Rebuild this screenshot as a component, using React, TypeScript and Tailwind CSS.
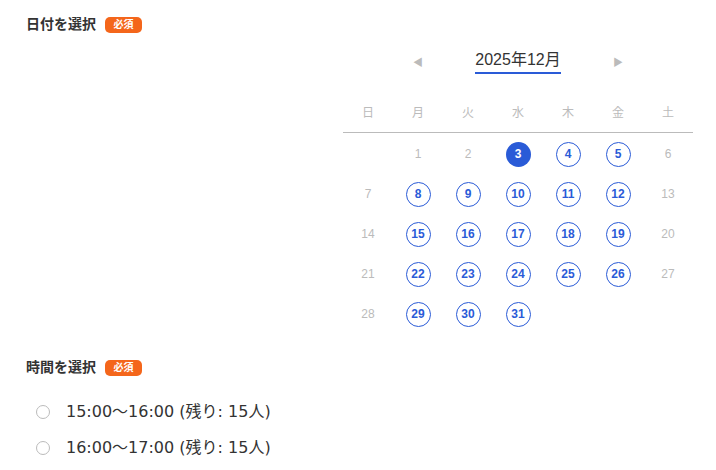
const weekdays = ['日', '月', '火', '水', '木', '金', '土'];

const available = new Set([3, 4, 5, 8, 9, 10, 11, 12, 15, 16, 17, 18, 19, 22, 23, 24, 25, 26, 29, 30, 31]);
const selected = 3;

const slots = ['15:00〜16:00 (残り: 15人)', '16:00〜17:00 (残り: 15人)'];

function Badge() {
    return (
        <span className="inline-flex h-4 w-[37px] items-center justify-center rounded-[5px] bg-[#f4661b] text-[10px] font-bold leading-none text-white">
            必須
        </span>
    );
}

function Heading({ title }: { title: string }) {
    return (
        <div className="flex items-center gap-[9px]">
            <h2 className="text-[14px] font-bold text-[#333]">{title}</h2>
            <Badge />
        </div>
    );
}

function Calendar() {
    const cells: (number | null)[] = [null];
    for (let d = 1; d <= 31; d++) cells.push(d);
    while (cells.length % 7 !== 0) cells.push(null);

    return (
        <div className="w-[350px]">
            <div className="grid h-[28px] grid-cols-7 items-center">
                <div />
                <button className="flex justify-center text-[10px] text-[#bbb]">◀</button>
                <div className="col-span-3 flex justify-center">
                    <span className="border-b-2 border-[#2a5bd7] pb-[2px] text-[16px] leading-[20px] text-[#333]">
                        2025年12月
                    </span>
                </div>
                <button className="flex justify-center text-[10px] text-[#bbb]">▶</button>
                <div />
            </div>
            <div className="mt-[29px] grid grid-cols-7 border-b border-[#bbb] pb-[11px]">
                {weekdays.map((w) => (
                    <div key={w} className="text-center text-[12px] leading-[16px] text-[#bbb]">
                        {w}
                    </div>
                ))}
            </div>
            <div className="mt-[1px] grid grid-cols-7">
                {cells.map((d, i) => (
                    <div key={i} className="flex h-10 items-center justify-center">
                        {d === null ? null : d === selected ? (
                            <span className="flex h-[25px] w-[25px] items-center justify-center rounded-full bg-[#2a5bd7] text-[12px] font-bold text-white">
                                {d}
                            </span>
                        ) : available.has(d) ? (
                            <span className="flex h-[25px] w-[25px] items-center justify-center rounded-full border-[1.5px] border-[#2a5bd7] text-[12px] font-bold text-[#2a5bd7]">
                                {d}
                            </span>
                        ) : (
                            <span className="text-[12px] text-[#bbb]">{d}</span>
                        )}
                    </div>
                ))}
            </div>
        </div>
    );
}

export default function App() {
    return (
        <div className="h-[470px] w-[716px] bg-white px-[26px] pt-[14px] font-['Liberation_Sans','Noto_Sans_CJK_JP',sans-serif]">
            <Heading title="日付を選択" />
            <div className="mt-[13px] flex justify-end">
                <div className="mr-[-3px]">
                    <Calendar />
                </div>
            </div>
            <div className="mt-[23px]">
                <Heading title="時間を選択" />
            </div>
            <div className="mt-[23px] flex flex-col gap-[14px] pl-[10px]">
                {slots.map((s, i) => (
                    <label key={s} className="flex items-center gap-[16px]">
                        <input type="radio" name="slot" className="sr-only" value={i} />
                        <span className="h-[14px] w-[14px] rounded-full border border-[#bbb] bg-white" />
                        <span className="font-['DejaVu_Sans','Noto_Sans_CJK_JP',sans-serif] text-[16px] leading-[22px] text-[#333]">
                            {s}
                        </span>
                    </label>
                ))}
            </div>
        </div>
    );
}
